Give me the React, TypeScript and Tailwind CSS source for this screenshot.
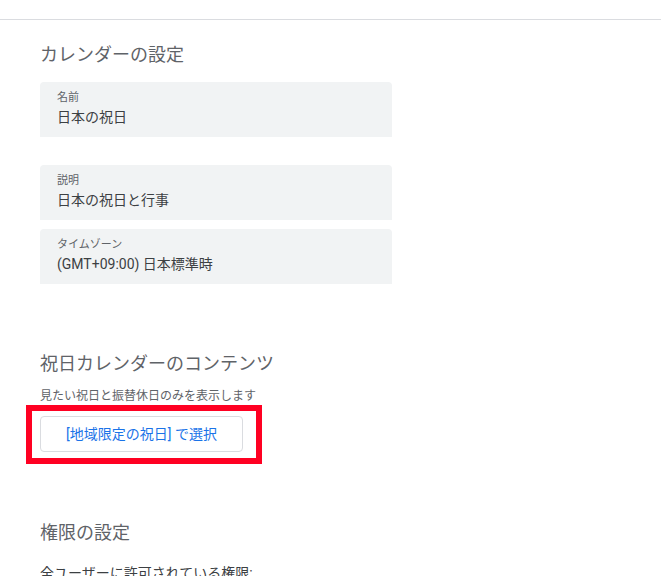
import React from "react";

const font = "font-['Roboto','Noto_Sans_CJK_JP',sans-serif]";

const Field: React.FC<{ label: string; value: string; className?: string }> = ({
  label,
  value,
  className = "",
}) => {
  return (
    <div
      className={`w-[352px] h-[55px] bg-[#f1f3f4] rounded-t-[4px] pl-[17px] pt-[8px] ${className}`}
    >
      <div className="text-[11px] leading-[16px] text-[#5f6368]">{label}</div>
      <div className="mt-[1px] text-[14px] leading-[20px] text-[#3c4043]">
        {value}
      </div>
    </div>
  );
};

const App: React.FC = () => {
  return (
    <div className={`h-[576px] w-full overflow-hidden bg-white ${font}`}>
      <div className="h-[20px] border-b border-[#dadce0]" />
      <div className="pl-[40px]">
        <h2 className="mt-[23px] text-[18px] leading-[24px] text-[#5f6368]">
          カレンダーの設定
        </h2>
        <Field className="mt-[15px]" label="名前" value="日本の祝日" />
        <Field className="mt-[28px]" label="説明" value="日本の祝日と行事" />
        <Field
          className="mt-[9px]"
          label="タイムゾーン"
          value="(GMT+09:00) 日本標準時"
        />

        <h2 className="mt-[68px] text-[18px] leading-[24px] text-[#5f6368]">
          祝日カレンダーのコンテンツ
        </h2>
        <p className="mt-[12px] text-[12px] leading-[16px] text-[#5f6368]">
          見たい祝日と振替休日のみを表示します
        </p>
        <div className="relative mt-[12px] w-fit">
          <button className="h-[36px] w-[203px] rounded-[4px] border border-[#dadce0] bg-white text-[14px] text-[#1a73e8]">
            [地域限定の祝日] で選択
          </button>
          <div className="pointer-events-none absolute -left-[14px] -top-[11px] -right-[19px] -bottom-[12px] border-[6px] border-[#ff0022]" />
        </div>

        <h2 className="mt-[69px] text-[18px] leading-[24px] text-[#5f6368]">
          権限の設定
        </h2>
        <p className="mt-[18px] text-[14px] leading-[20px] text-[#3c4043]">
          全ユーザーに許可されている権限:
        </p>
      </div>
    </div>
  );
};

export default App;
